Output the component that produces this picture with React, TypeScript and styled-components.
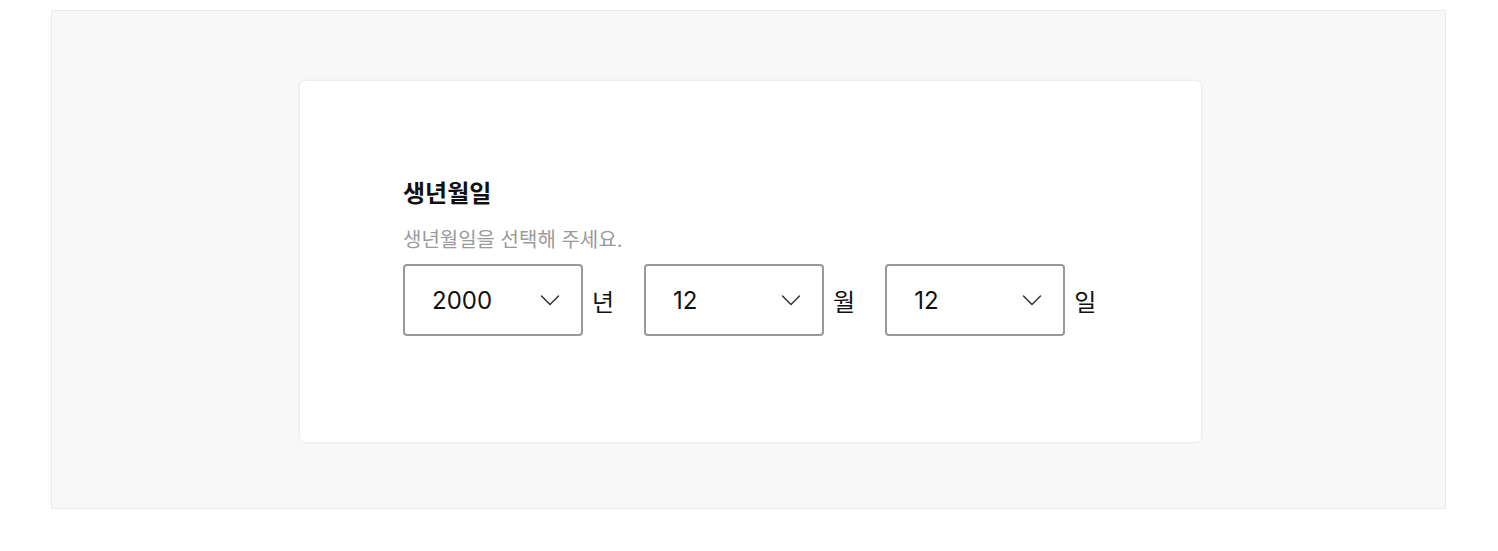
import React from "react";
import styled, { createGlobalStyle } from "styled-components";

const Global = createGlobalStyle`
  html, body { margin: 0; padding: 0; background: #fff; }
  body { font-family: Inter, "Noto Sans CJK KR", sans-serif; color: #111; }
`;

const Page = styled.div`
  padding: 10px 52px 0 51px;
`;

const Stage = styled.div`
  box-sizing: border-box;
  height: 499px;
  background: #f8f8f8;
  border: 1px solid #ebebeb;
  display: flex;
  justify-content: center;
  padding-top: 70px;
`;

const Card = styled.div`
  box-sizing: border-box;
  width: 901px;
  height: 361px;
  margin-left: 4px;
  background: #fff;
  border-radius: 5px;
  box-shadow: 0 0 3px rgba(0, 0, 0, 0.12);
  padding: 97px 103px 0;
`;

const Title = styled.h2`
  margin: 0;
  font-size: 24px;
  font-weight: 700;
  line-height: 32px;
  color: #111;
`;

const Help = styled.p`
  margin: 16px 0 0;
  font-size: 20px;
  line-height: 28px;
  color: #9a9a9a;
  font-weight: 400;
`;

const Row = styled.div`
  display: flex;
  align-items: center;
  gap: 30px;
  margin-top: 10px;
`;

const Group = styled.label`
  display: flex;
  align-items: center;
  gap: 9px;
`;

const Select = styled.div`
  box-sizing: border-box;
  width: 180px;
  height: 72px;
  border: 2px solid #999;
  border-radius: 4px;
  display: flex;
  align-items: center;
  justify-content: space-between;
  padding: 0 21px 0 27px;
  font-size: 24px;
  color: #111;
`;

const Unit = styled.span`
  font-size: 24px;
  color: #111;
`;

const Chevron = () => (
  <svg width="20" height="12" viewBox="0 0 20 12" fill="none">
    <path d="M1.5 2 L10 10.5 L18.5 2" stroke="#333" strokeWidth="1.5" strokeLinecap="round" strokeLinejoin="round" />
  </svg>
);

const fields = [
  { value: "2000", unit: "년" },
  { value: "12", unit: "월" },
  { value: "12", unit: "일" },
];

export default function App() {
  return (
    <>
      <Global />
      <Page>
        <Stage>
          <Card>
            <Title>생년월일</Title>
            <Help>생년월일을 선택해 주세요.</Help>
            <Row>
              {fields.map((f, i) => (
                <Group key={i}>
                  <Select>
                    <span>{f.value}</span>
                    <Chevron />
                  </Select>
                  <Unit>{f.unit}</Unit>
                </Group>
              ))}
            </Row>
          </Card>
        </Stage>
      </Page>
    </>
  );
}
